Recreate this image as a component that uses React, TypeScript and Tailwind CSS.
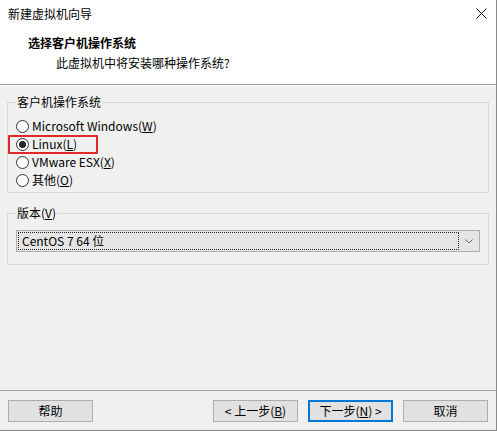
import React from 'react'

const font = { fontFamily: '"Microsoft YaHei UI", "Noto Sans CJK SC", "Noto Sans", sans-serif' }

function Radio({ label, hot, checked }: { label: string; hot: string; checked?: boolean }) {
  return (
    <div className="flex items-center h-[18px] gap-[3px]">
      <span className="w-[13px] h-[13px] rounded-full border border-[#333] bg-white flex items-center justify-center">
        {checked ? <span className="w-[7px] h-[7px] rounded-full bg-[#222]" /> : null}
      </span>
      <span>
        {label}(<span className="underline">{hot}</span>)
      </span>
    </div>
  )
}

function Btn({ children, primary }: { children: React.ReactNode; primary?: boolean }) {
  return (
    <div
      className={
        'w-[85px] h-[22px] flex items-center justify-center bg-[#e1e1e1] ' +
        (primary ? 'border-2 border-[#0078d7]' : 'border border-[#adadad]')
      }
    >
      {children}
    </div>
  )
}

export default function App() {
  return (
    <div className="w-[497px] h-[431px] bg-[#f0f0f0] flex flex-col text-[12px] text-black border-r border-b border-[#8a8a8a]" style={font}>
      <div className="h-[27px] bg-white flex items-center justify-between pl-[8px] pr-[8px]">
        <span>新建虚拟机向导</span>
        <svg width="11" height="11" viewBox="0 0 11 11" className="mr-[1px]">
          <path d="M0.5 0.5 L10.5 10.5 M10.5 0.5 L0.5 10.5" stroke="#111" strokeWidth="1" />
        </svg>
      </div>
      <div className="h-[58px] bg-white border-b border-[#a0a0a0] flex flex-col pl-[28px] pt-[6px]">
        <div className="font-bold h-[20px] flex items-center">选择客户机操作系统</div>
        <div className="pl-[28px] h-[19px] flex items-center">此虚拟机中将安装哪种操作系统?</div>
      </div>
      <div className="flex-1 flex flex-col px-[7px] pt-[8px] border-t border-white">
        <fieldset className="relative border border-[#d9d9d9] pl-[8px] h-[99px]">
          <legend className="px-[1px] leading-[16px]">客户机操作系统</legend>
          <div className="flex flex-col pt-[7px]">
            <Radio label="Microsoft Windows" hot="W" />
            <Radio label="Linux" hot="L" checked />
            <Radio label="VMware ESX" hot="X" />
            <Radio label="其他" hot="O" />
          </div>
          <div className="absolute left-[0px] top-[25px] w-[90px] h-[19px] border-2 border-[#e02828] rounded-[1px]" />
        </fieldset>
        <fieldset className="border border-[#d9d9d9] px-[8px] mt-[12px] h-[60px]">
          <legend className="px-[1px] leading-[16px]">
            版本(<span className="underline">V</span>)
          </legend>
          <div className="mt-[9px] h-[22px] w-[464px] bg-[#e5e5e5] border border-[#adadad] flex items-center p-[1px]">
            <div className="flex-1 h-full border border-dotted border-[#222] flex items-center pl-[3px]">
              CentOS 7 64 位
            </div>
            <div className="w-[19px] flex items-center justify-center">
              <svg width="8" height="5" viewBox="0 0 8 5">
                <path d="M0.5 0.5 L4 4 L7.5 0.5" stroke="#666" fill="none" strokeWidth="1" />
              </svg>
            </div>
          </div>
        </fieldset>
        <div className="flex-1" />
      </div>
      <div className="h-[40px] border-t border-[#a0a0a0] flex items-start pt-[9px] px-[8px] gap-[10px]">
        <Btn>帮助</Btn>
        <div className="flex-1" />
        <Btn>
          &lt; 上一步(<span className="underline">B</span>)
        </Btn>
        <Btn primary>
          下一步(<span className="underline">N</span>) &gt;
        </Btn>
        <Btn>取消</Btn>
      </div>
    </div>
  )
}
